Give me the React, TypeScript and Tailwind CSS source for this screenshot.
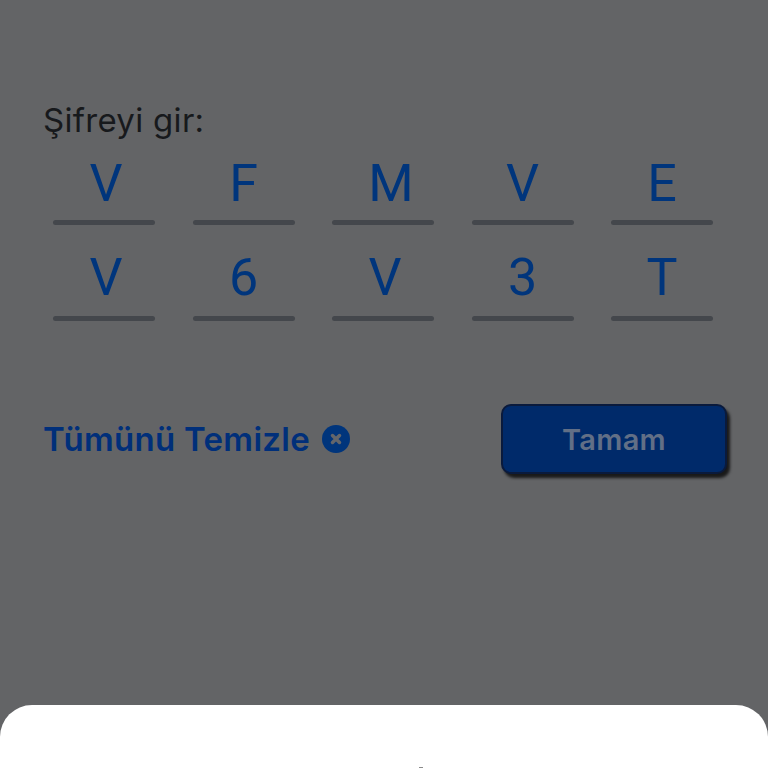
const row1 = [
  { c: "V", cls: "pl-1" },
  { c: "F", cls: "" },
  { c: "M", cls: "pl-4" },
  { c: "V", cls: "" },
  { c: "E", cls: "" },
];
const row2 = [
  { c: "V", cls: "pl-1" },
  { c: "6", cls: "" },
  { c: "V", cls: "pl-1" },
  { c: "3", cls: "" },
  { c: "T", cls: "" },
];

function Row({ items, leading }: { items: { c: string; cls: string }[]; leading: string }) {
  return (
    <div className="flex gap-[37.5px] pl-[53px]">
      {items.map((it, i) => (
        <div key={i} className="flex w-[102px] flex-col">
          <div
            className={`h-[71px] text-center text-[52px] text-[#00357c] [font-family:Roboto,sans-serif] ${leading} ${it.cls}`}
          >
            {it.c}
          </div>
          <div className="h-[5px] rounded-full bg-[#44474c]" />
        </div>
      ))}
    </div>
  );
}

export default function App() {
  return (
    <div className="flex h-[768px] w-[768px] flex-col overflow-hidden bg-[#636466] [font-family:Inter,'Open_Sans',sans-serif]">
      <div className="flex-1">
        <div className="pl-[43px] pt-[99px] text-[33px] leading-[42px] tracking-[0.3px] text-[#17191c]">Şifreyi gir:</div>
        <div className="mt-[8px] flex flex-col gap-[20px]">
          <Row items={row1} leading="leading-[70px]" />
          <Row items={row2} leading="leading-[66px]" />
        </div>
        <div className="mt-[83px] flex items-center justify-between pl-[43px] pr-[41px]">
          <div className="flex items-center gap-[12px]">
            <span className="text-[33px] font-semibold leading-[42px] tracking-[0.3px] text-[#002f7a]">Tümünü Temizle</span>
            <svg width="28" height="28" viewBox="0 0 28 28" aria-hidden="true">
              <circle cx="14" cy="14" r="14" fill="#00357c" />
              <path d="M10.5 10.5l7 7M17.5 10.5l-7 7" stroke="#63666b" strokeWidth="3.5" strokeLinecap="round" />
            </svg>
          </div>
          <button className="flex h-[70px] w-[226px] items-center justify-center rounded-[10px] border-2 border-[#0a1a3c] bg-[#002a6a] pt-[1px] text-[29px] font-semibold tracking-[0.3px] text-[#626f86] shadow-[3px_4px_3px_rgba(0,0,0,0.75)]">
            Tamam
          </button>
        </div>
      </div>
      <div className="flex h-[63px] justify-center rounded-t-[32px] bg-white pl-[73px] pt-[62px]">
        <div className="h-[1px] w-[4px] bg-[#8a8a8a]" />
      </div>
    </div>
  );
}
